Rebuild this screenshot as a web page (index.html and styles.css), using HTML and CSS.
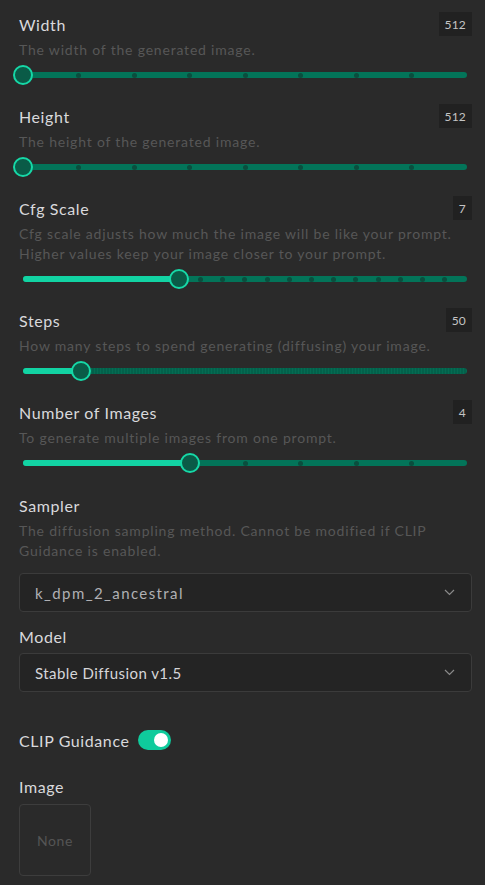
FILE: index.html
```html
<!DOCTYPE html>
<html lang="en">
<head>
<meta charset="utf-8">
<title>Generation settings</title>
<link rel="stylesheet" href="styles.css">
</head>
<body>
<div class="panel">
  <section class="field">
    <div class="head"><span class="label">Width</span><span class="badge">512</span></div>
    <p class="desc">The width of the generated image.</p>
    <div class="slider"><div class="track">
      <div class="ticks"><i></i><i></i><i></i><i></i><i></i><i></i><i></i><i></i><i></i></div>
      <div class="fill" style="width:0%"></div>
      <div class="thumb" style="left:0%"></div>
    </div></div>
  </section>

  <section class="field">
    <div class="head"><span class="label">Height</span><span class="badge">512</span></div>
    <p class="desc">The height of the generated image.</p>
    <div class="slider"><div class="track">
      <div class="ticks"><i></i><i></i><i></i><i></i><i></i><i></i><i></i><i></i><i></i></div>
      <div class="fill" style="width:0%"></div>
      <div class="thumb" style="left:0%"></div>
    </div></div>
  </section>

  <section class="field">
    <div class="head"><span class="label">Cfg Scale</span><span class="badge">7</span></div>
    <p class="desc">Cfg scale adjusts how much the image will be like your prompt. Higher values keep your image closer to your prompt.</p>
    <div class="slider"><div class="track">
      <div class="ticks"><i></i><i></i><i></i><i></i><i></i><i></i><i></i><i></i><i></i><i></i><i></i><i></i><i></i><i></i><i></i><i></i><i></i><i></i><i></i><i></i><i></i></div>
      <div class="fill" style="width:35.1%"></div>
      <div class="thumb" style="left:35.1%"></div>
    </div></div>
  </section>

  <section class="field">
    <div class="head"><span class="label">Steps</span><span class="badge">50</span></div>
    <p class="desc">How many steps to spend generating (diffusing) your image.</p>
    <div class="slider"><div class="track dense">
      <div class="fill" style="width:13%"></div>
      <div class="thumb" style="left:13%"></div>
    </div></div>
  </section>

  <section class="field">
    <div class="head"><span class="label">Number of Images</span><span class="badge">4</span></div>
    <p class="desc">To generate multiple images from one prompt.</p>
    <div class="slider"><div class="track">
      <div class="ticks"><i></i><i></i><i></i><i></i><i></i><i></i><i></i><i></i><i></i></div>
      <div class="fill" style="width:37.5%"></div>
      <div class="thumb" style="left:37.5%"></div>
    </div></div>
  </section>

  <section class="field field-sampler">
    <div class="head"><span class="label">Sampler</span></div>
    <p class="desc">The diffusion sampling method. Cannot be modified if CLIP Guidance is enabled.</p>
    <div class="select select-dim">
      <span>k_dpm_2_ancestral</span>
      <svg class="chev" width="11" height="7" viewBox="0 0 11 7"><path d="M1 1l4.5 4.5L10 1" fill="none" stroke="#8a8a8a" stroke-width="1.2"/></svg>
    </div>
    <div class="head head-model"><span class="label">Model</span></div>
    <div class="select select-model">
      <span>Stable Diffusion v1.5</span>
      <svg class="chev" width="11" height="7" viewBox="0 0 11 7"><path d="M1 1l4.5 4.5L10 1" fill="none" stroke="#8a8a8a" stroke-width="1.2"/></svg>
    </div>
  </section>

  <div class="toggle-row">
    <span class="label">CLIP Guidance</span>
    <span class="toggle"><span class="knob"></span></span>
  </div>

  <div class="image-field">
    <span class="label">Image</span>
    <div class="image-box">None</div>
  </div>
</div>
</body>
</html>
```

FILE: styles.css
```css
html, body {
  margin: 0;
  padding: 0;
  background: #2a2a2a;
}
body {
  font-family: Lato, "Open Sans", sans-serif;
  width: 485px;
  height: 885px;
  overflow: hidden;
}
.panel {
  padding: 12px 13px 0 19px;
}
.field + .field {
  margin-top: 19px;
}
.field + .field-sampler {
  margin-top: 20px;
}
.head {
  display: flex;
  justify-content: space-between;
  align-items: center;
  height: 24px;
}
.label {
  font-size: 16px;
  color: #d9d9dc;
  letter-spacing: 0.6px;
}
.badge {
  box-sizing: border-box;
  height: 24px;
  min-width: 18px;
  padding: 0 6px;
  display: flex;
  align-items: center;
  justify-content: center;
  background: #212121;
  color: #c4c4c4;
  font-size: 12px;
  letter-spacing: 0.2px;
}
.desc {
  margin: 4px 0 0;
  font-size: 14px;
  line-height: 20px;
  color: #575757;
  letter-spacing: 0.8px;
}
.slider {
  display: flex;
  align-items: center;
  height: 20px;
  margin-top: 5px;
  padding: 0 5px 0 4px;
}
.track {
  position: relative;
  flex: 1;
  height: 6px;
  border-radius: 3px;
  background: #037459;
}
.track.dense {
  background-color: #03664f;
  background-image: repeating-linear-gradient(90deg, #03614b 0 2px, #046c53 2px 3px);
}
.ticks {
  position: absolute;
  top: 0;
  bottom: 0;
  left: -2.5px;
  right: -2.5px;
  display: flex;
  justify-content: space-between;
  align-items: center;
}
.ticks i {
  width: 5px;
  height: 5px;
  border-radius: 50%;
  background: #0a4e3e;
}
.ticks i:first-child,
.ticks i:last-child {
  visibility: hidden;
}
.fill {
  position: relative;
  height: 100%;
  border-radius: 3px;
  background: #12d3a3;
}
.thumb {
  position: absolute;
  top: 50%;
  width: 20px;
  height: 20px;
  margin: -10px 0 0 -10px;
  box-sizing: border-box;
  border: 2px solid #16d8a7;
  border-radius: 50%;
  background: #0a5b47;
}
.select {
  box-sizing: border-box;
  height: 39px;
  display: flex;
  align-items: center;
  justify-content: space-between;
  padding: 0 16px 0 15px;
  border: 1px solid #3b3b3b;
  border-radius: 4px;
  background: #242424;
  font-size: 15px;
}
.select-dim {
  margin-top: 12px;
  color: #b0b0b4;
  letter-spacing: 1.4px;
}
.select-model {
  margin-top: 5px;
  color: #d6d6d9;
  letter-spacing: 0.45px;
}
.head-model {
  margin-top: 12px;
}
.chev {
  display: block;
}
.toggle-row {
  display: flex;
  align-items: center;
  gap: 8px;
  height: 22px;
  margin-top: 37px;
}
.toggle {
  box-sizing: border-box;
  display: flex;
  align-items: center;
  justify-content: flex-end;
  width: 33px;
  height: 20px;
  padding: 0 3px;
  border-radius: 10px;
  background: #0fcb9c;
}
.knob {
  width: 14px;
  height: 14px;
  border-radius: 50%;
  background: #ffffff;
}
.image-field {
  margin-top: 25px;
  display: flex;
  flex-direction: column;
  align-items: flex-start;
}
.image-field .label {
  line-height: 22px;
}
.image-box {
  box-sizing: border-box;
  margin-top: 6px;
  width: 72px;
  height: 72px;
  display: flex;
  align-items: center;
  justify-content: center;
  border: 1px solid #3d3d3d;
  border-radius: 4px;
  color: #555555;
  font-size: 14px;
  letter-spacing: 0.6px;
}
```
